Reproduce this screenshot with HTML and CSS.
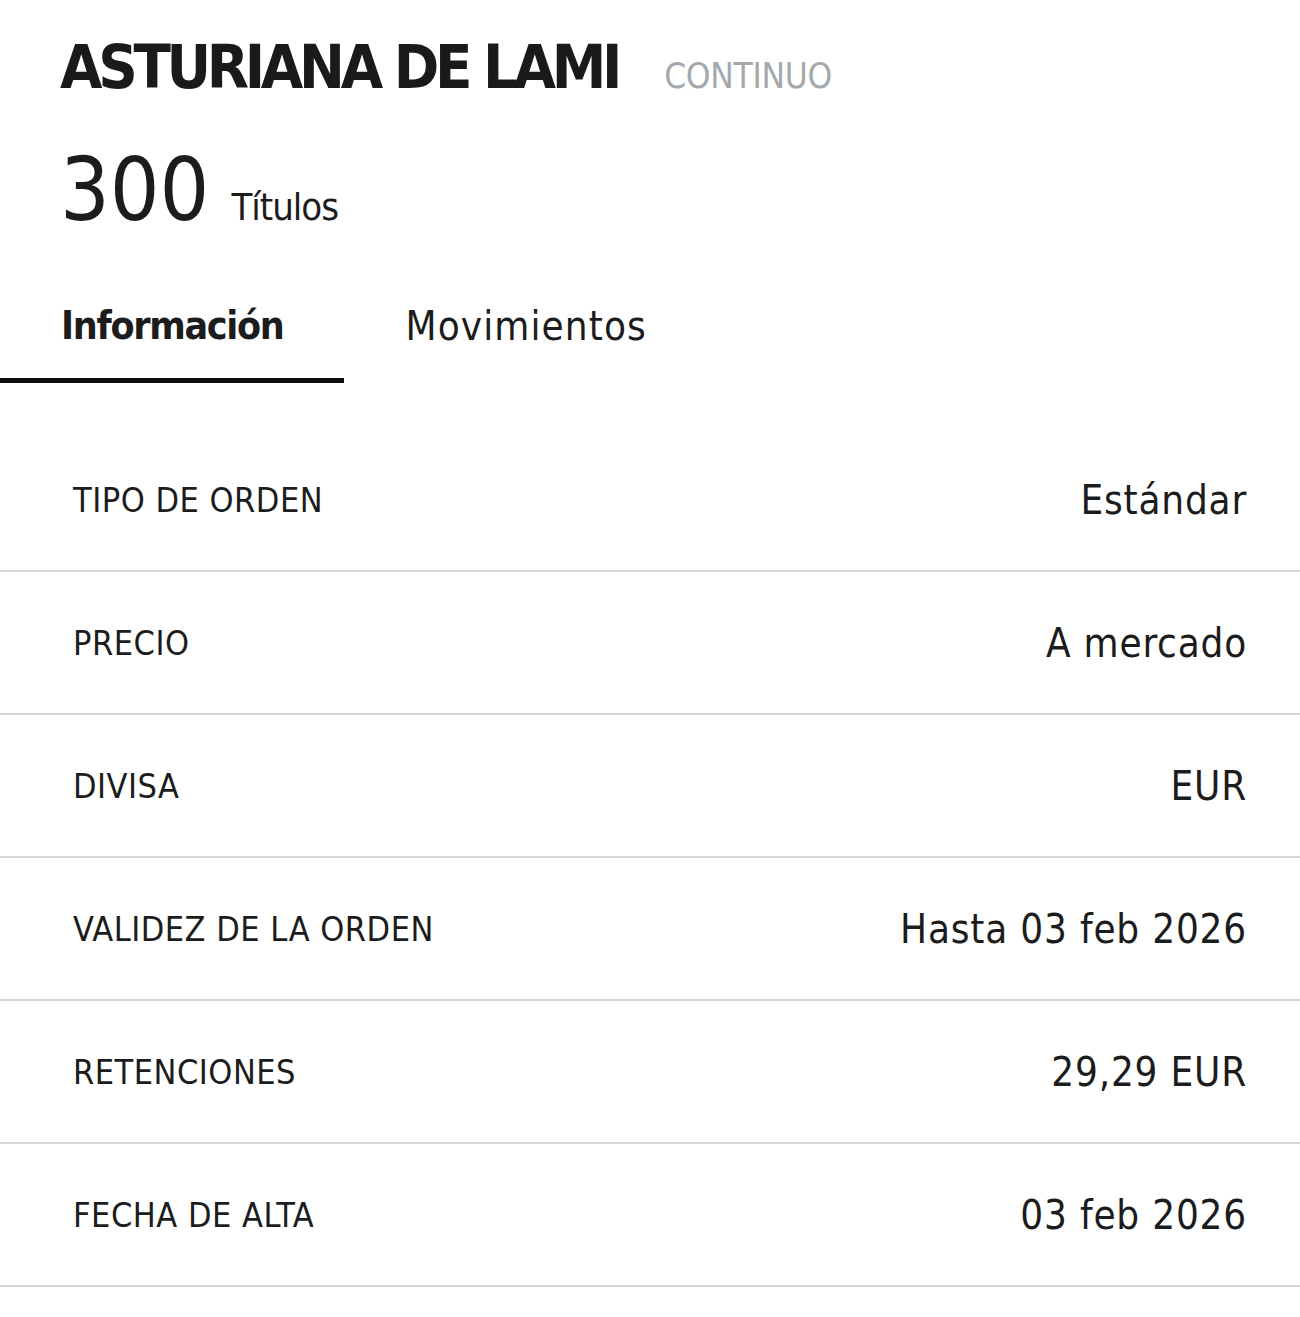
FILE: index.html
```html
<!DOCTYPE html>
<html lang="es">
<head>
<meta charset="utf-8">
<title>Asturiana de Lami</title>
<link rel="stylesheet" href="styles.css">
</head>
<body>
<header class="header">
  <div class="title-row">
    <h1 class="title">ASTURIANA DE LAMI</h1>
    <span class="market">CONTINUO</span>
  </div>
  <div class="qty-row">
    <span class="qty">300</span>
    <span class="qty-unit">Títulos</span>
  </div>
</header>
<nav class="tabs">
  <div class="tab tab-active">Información</div>
  <div class="tab">Movimientos</div>
</nav>
<section class="details">
  <div class="row"><span class="label">TIPO DE ORDEN</span><span class="value">Estándar</span></div>
  <div class="row"><span class="label">PRECIO</span><span class="value">A mercado</span></div>
  <div class="row"><span class="label">DIVISA</span><span class="value">EUR</span></div>
  <div class="row"><span class="label">VALIDEZ DE LA ORDEN</span><span class="value">Hasta 03 feb 2026</span></div>
  <div class="row"><span class="label">RETENCIONES</span><span class="value">29,29 EUR</span></div>
  <div class="row"><span class="label">FECHA DE ALTA</span><span class="value">03 feb 2026</span></div>
</section>
</body>
</html>
```

FILE: styles.css
```css
html, body {
  margin: 0;
  padding: 0;
  background: #ffffff;
}
body {
  font-family: "DejaVu Sans Condensed", "DejaVu Sans", sans-serif;
  font-stretch: condensed;
  color: #1c1c1c;
}
.header {
  padding: 22px 0 0 60px;
}
.title-row {
  display: flex;
  align-items: baseline;
  gap: 46px;
}
.title {
  margin: 0;
  font-size: 61px;
  font-weight: bold;
  line-height: 90px;
  letter-spacing: -4.3px;
  color: #1a1a1a;
}
.market {
  font-size: 35px;
  font-weight: 300;
  color: #a3a9ac;
  letter-spacing: -0.3px;
}
.qty-row {
  display: flex;
  align-items: baseline;
  gap: 22px;
  margin-top: 28px;
}
.qty {
  font-size: 87px;
  line-height: 100px;
  color: #1c1c1c;
}
.qty-unit {
  font-size: 38px;
  color: #1c1c1c;
  letter-spacing: -1px;
}
.tabs {
  display: flex;
  margin-top: 56px;
}
.tab {
  padding: 0 62px 22px;
  font-size: 40px;
  line-height: 60px;
  letter-spacing: 1.1px;
  border-bottom: 5px solid transparent;
  color: #1c1c1c;
}
.tab-active {
  font-weight: bold;
  font-size: 39px;
  letter-spacing: -1.3px;
  padding: 0 60px 22px 61px;
  border-bottom-color: #0d0d0d;
}
.details {
  margin-top: 46px;
}
.row {
  display: flex;
  justify-content: space-between;
  align-items: center;
  height: 141px;
  padding: 0 53px 0 73px;
  border-bottom: 2px solid #d3d7d9;
}
.label {
  font-size: 34px;
  letter-spacing: 0.5px;
  color: #1c1c1c;
}
.value {
  font-size: 40px;
  letter-spacing: 0.8px;
  color: #1c1c1c;
}
```
